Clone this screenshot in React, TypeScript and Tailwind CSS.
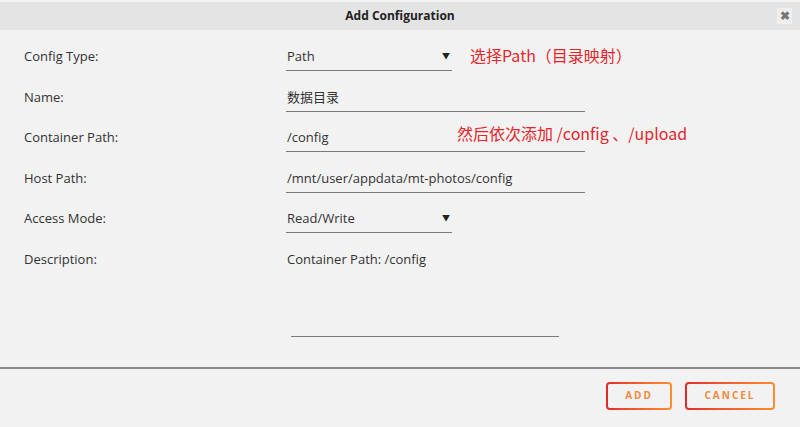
import React from "react";

const font = { fontFamily: '"Open Sans", "Noto Sans CJK SC", sans-serif' };
const cjk = { fontFamily: '"Noto Sans CJK SC", sans-serif' };

function Row({ label, children }: { label: string; children: React.ReactNode }) {
  return (
    <div className="flex h-[40.6px] items-start">
      <div className="w-[286px] shrink-0 pl-[24px] leading-[28px]">{label}</div>
      <div className="flex items-start">{children}</div>
    </div>
  );
}

function Field({ value, w, select }: { value: string; w: string; select?: boolean }) {
  return (
    <div className={`flex h-[29px] items-center justify-between border-b-[1.5px] border-[#7a7a7a] pl-[1px] pr-[2px] ${w}`}>
      <span className="leading-[28px]">{value}</span>
      {select && <span className="text-[8px] text-[#222]">▼</span>}
    </div>
  );
}

function Btn({ label, w }: { label: string; w: string }) {
  return (
    <div className={`rounded-[4px] bg-gradient-to-r from-[#e22828] to-[#ff8c2f] p-[2px] ${w}`}>
      <div className="flex h-[24px] items-center justify-center rounded-[2px] bg-[#f2f2f2] text-[10px] font-bold tracking-[2px] text-[#f08a3e]">
        {label}
      </div>
    </div>
  );
}

export default function App() {
  return (
    <div className="relative h-[427px] w-[800px] overflow-hidden bg-[#f2f2f2] text-[13px] text-[#333]" style={font}>
      <div className="h-[2px] bg-[#f5f5f5]" />
      <div className="relative flex h-[28px] items-center justify-center bg-[#e4e4e4]">
        <span className="text-[12px] font-bold text-[#222]">Add Configuration</span>
        <div className="absolute right-[8px] top-[6px] flex h-[16px] w-[15px] items-center justify-center bg-[#efefef] text-[12px] font-bold leading-none text-[#777]">
          ✖
        </div>
      </div>
      <div className="pt-[12px]">
        <div className="relative">
          <Row label="Config Type:">
            <Field value="Path" w="w-[166px]" select />
            <span className="ml-[18px] mt-[2px] text-[16px] leading-[22px] text-[#e3262b]" style={cjk}>
              选择Path（目录映射）
            </span>
          </Row>
          <Row label="Name:">
            <Field value="数据目录" w="w-[299px]" />
          </Row>
          <Row label="Container Path:">
            <Field value="/config" w="w-[299px]" />
          </Row>
          <Row label="Host Path:">
            <Field value="/mnt/user/appdata/mt-photos/config" w="w-[299px]" />
          </Row>
          <Row label="Access Mode:">
            <Field value="Read/Write" w="w-[166px]" select />
          </Row>
          <Row label="Description:">
            <span className="pl-[1px] leading-[28px]">Container Path: /config</span>
          </Row>
          <span className="absolute left-[457px] top-[80px] text-[16px] leading-[22px] text-[#e3262b]" style={cjk}>
            然后依次添加 /config 、/upload
          </span>
        </div>
        <div className="ml-[291px] mt-[50px] h-[1.5px] w-[268px] bg-[#7a7a7a]" />
        <div className="mt-[30px] h-[1.5px] w-full bg-[#8a8a8a]" />
        <div className="flex justify-end gap-[13px] pr-[25px] pt-[13px]">
          <Btn label="ADD" w="w-[66px]" />
          <Btn label="CANCEL" w="w-[90px]" />
        </div>
      </div>
    </div>
  );
}
